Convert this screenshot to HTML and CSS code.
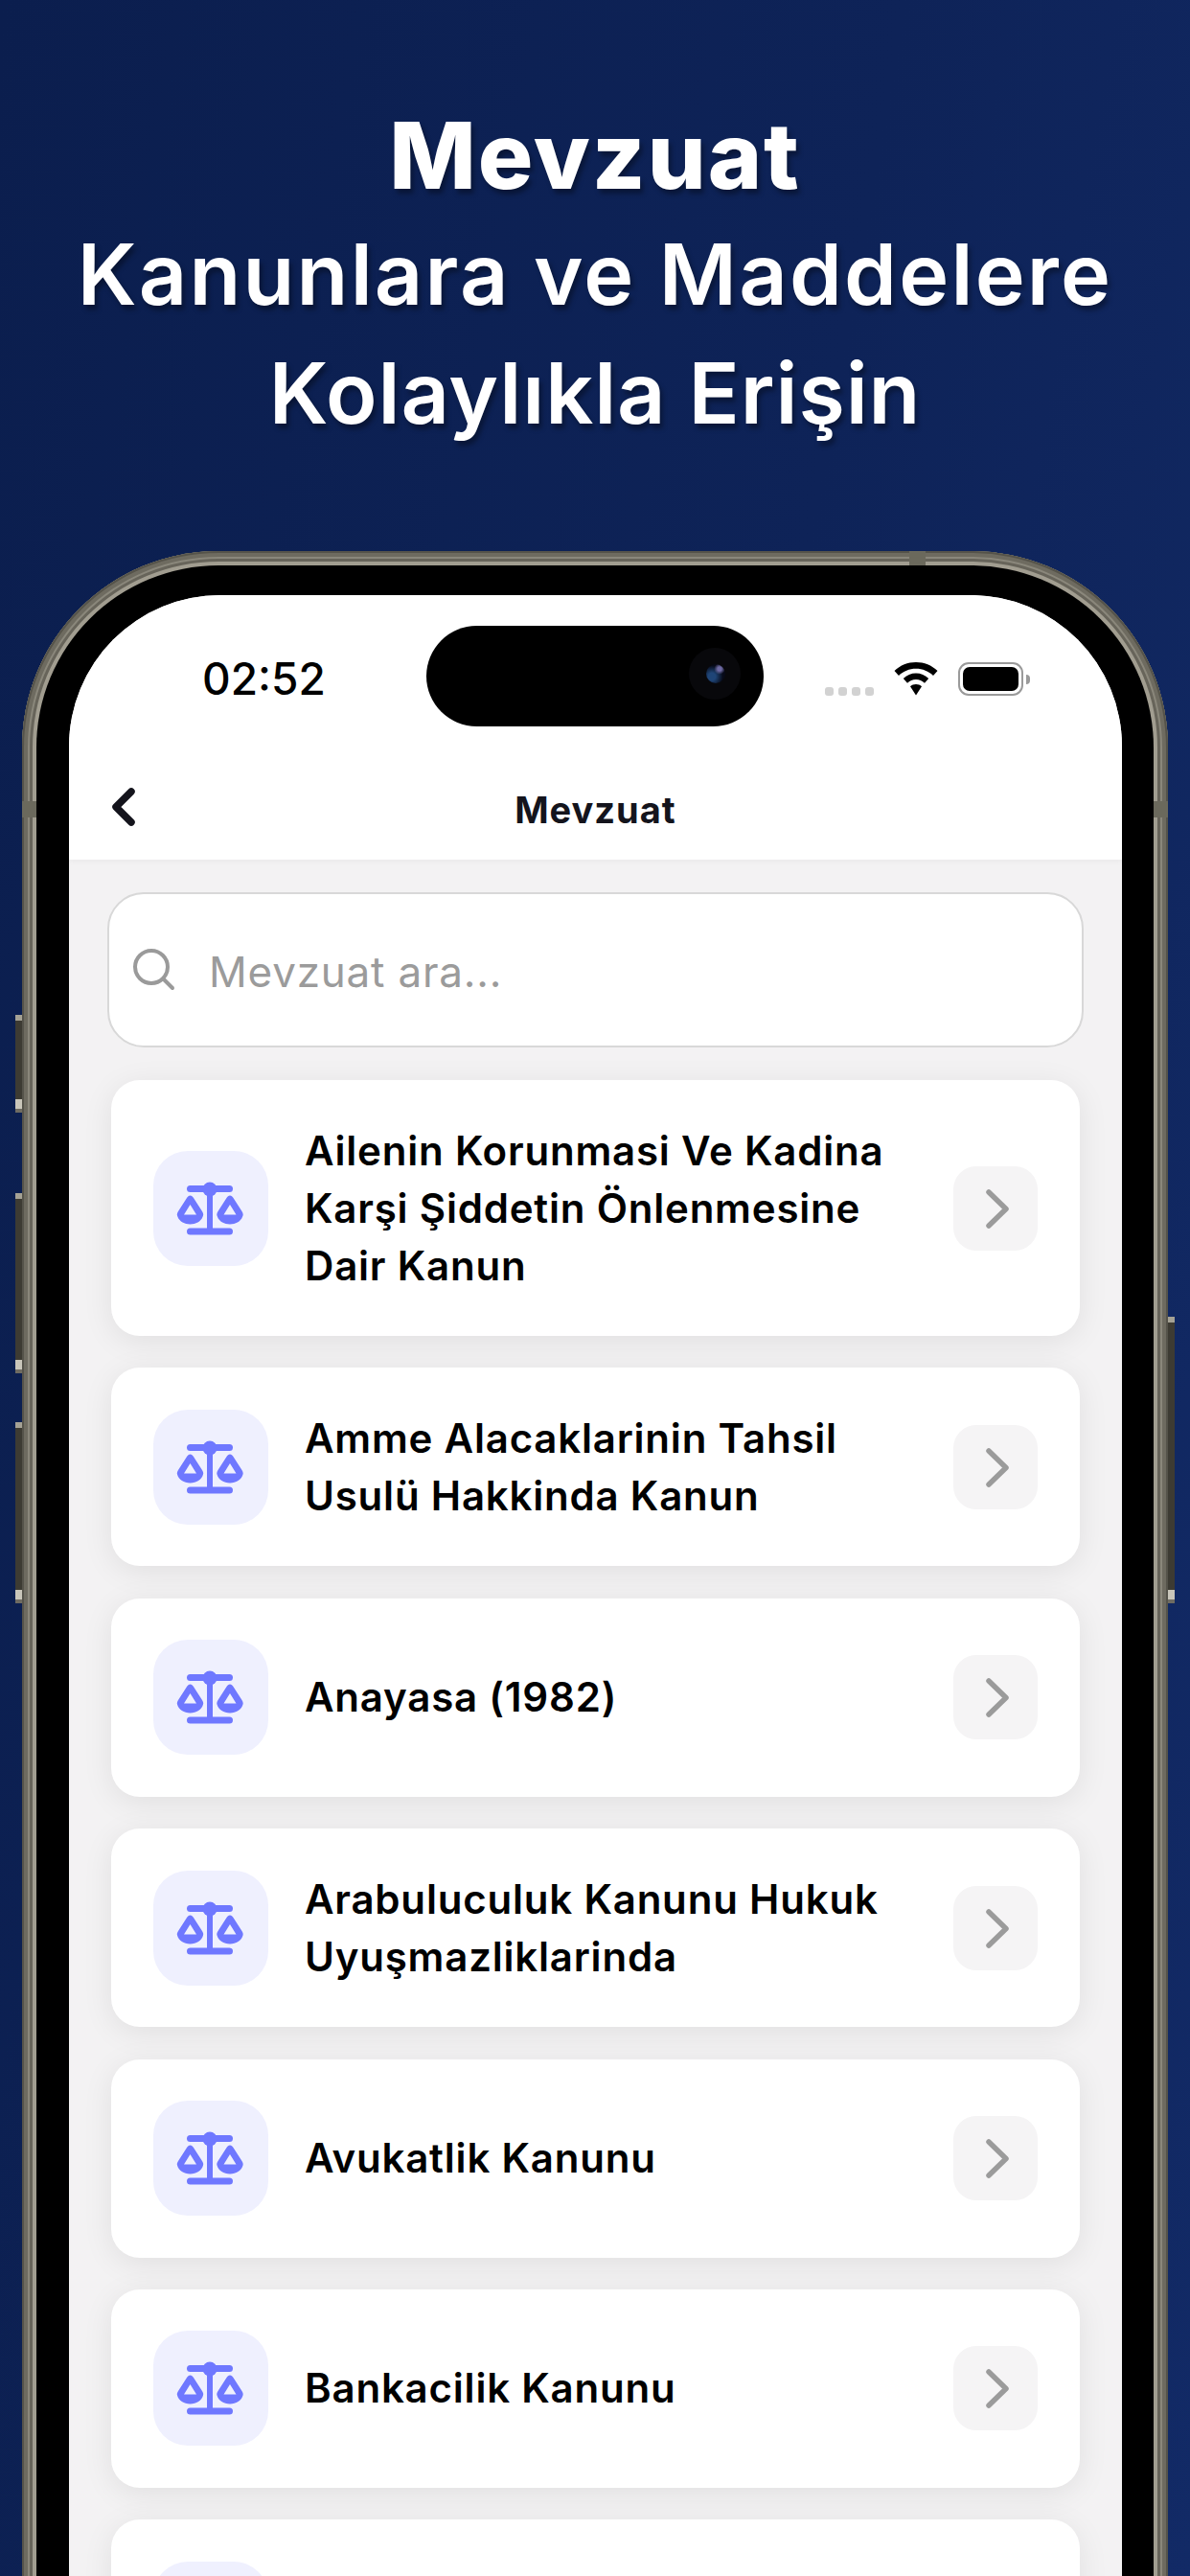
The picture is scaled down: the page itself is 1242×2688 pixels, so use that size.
FILE: index.html
```html
<!DOCTYPE html>
<html>
<head>
  <title>Mevzuat</title>
  <link rel="stylesheet" href="styles.css">
</head>
<body>
  <svg class="defs" width="0" height="0">
    <symbol id="scale" viewBox="0 0 120 120">
      <rect x="35" y="36" width="48" height="7" rx="3.5"/>
      <circle cx="59" cy="40" r="7.5"/>
      <rect x="56" y="42" width="6" height="40"/>
      <rect x="35" y="80.5" width="48" height="7" rx="3.5"/>
      <path id="pan" fill-rule="evenodd" d="M38.5 46.5C40 46.5 41 47.5 42 49L51 63C52 64.5 52.5 66 52 67.5C50.5 73 45 76.5 38.5 76.5C32 76.5 26.5 73 25 67.5C24.5 66 25 64.5 26 63L35 49C36 47.5 37 46.5 38.5 46.5ZM38.5 56L32 66.5H45Z"/>
      <use href="#pan" x="41.5"/>
    </symbol>
    <symbol id="next" viewBox="0 0 88 88">
      <path d="M37 27L55 44.5L37 62" fill="none" stroke="#9b9b9b" stroke-width="5.5" stroke-linecap="round" stroke-linejoin="round"/>
    </symbol>
  </svg>

  <header class="headline">
    <h1>Mevzuat</h1>
    <p>Kanunlara ve Maddelere</p>
    <p class="tight">Kolaylıkla Erişin</p>
  </header>

  <div class="phone-clip">
    <div class="phone">
      <span class="side-btn btn-a"></span>
      <span class="side-btn btn-b"></span>
      <span class="side-btn btn-c"></span>
      <span class="side-btn btn-d"></span>
      <span class="band band-left"></span>
      <span class="band band-right"></span>
      <span class="band band-top"></span>

      <div class="bezel">
        <div class="screen">
          <div class="island"><span class="camera"><span class="lens"></span></span></div>

          <div class="topbar">
            <div class="status">
              <span class="time">02:52</span>
              <div class="status-icons">
                <div class="signal"><i></i><i></i><i></i><i></i></div>
                <svg class="wifi" width="46" height="35" viewBox="0 0 46 35">
                  <path d="M23 0C14.500 0 6.500 3.200 0.500 9L5 14C9.800 9.500 16 6.800 23 6.800C30 6.800 36.200 9.500 41 14L45.500 9C39.500 3.200 31.500 0 23 0Z"/>
                  <path d="M23 11.500C18 11.500 13.300 13.500 9.800 17L14 21.700C16.400 19.400 19.500 18 23 18C26.500 18 29.600 19.400 32 21.700L36.200 17C32.700 13.500 28 11.500 23 11.500Z"/>
                  <path d="M23 23C20.700 23 18.600 23.900 17 25.300L23 34.500L29 25.300C27.400 23.900 25.300 23 23 23Z"/>
                </svg>
                <div class="battery"><span class="battery-fill"></span></div>
                <span class="battery-nub"></span>
              </div>
            </div>
            <nav class="nav">
              <svg class="back" width="26" height="40" viewBox="0 0 26 40">
                <path d="M21 4L5 20L21 36" fill="none" stroke="#14141c" stroke-width="7.500" stroke-linecap="round" stroke-linejoin="round"/>
              </svg>
              <span class="nav-title">Mevzuat</span>
            </nav>
          </div>

          <div class="content">
            <div class="search">
              <svg class="search-icon" width="48" height="48" viewBox="0 0 48 48">
                <circle cx="21" cy="21" r="17" fill="none" stroke="#9a9a9a" stroke-width="4"/>
                <path d="M34 34L43 43" stroke="#9a9a9a" stroke-width="4" stroke-linecap="round"/>
              </svg>
              <span class="search-text">Mevzuat ara...</span>
            </div>

            <div class="list">
              <div class="card">
                <svg class="card-icon"><use href="#scale"/></svg>
                <span class="card-title">Ailenin Korunmasi Ve Kadina Karşi Şiddetin Önlenmesine Dair Kanun</span>
                <svg class="card-next"><use href="#next"/></svg>
              </div>
              <div class="card">
                <svg class="card-icon"><use href="#scale"/></svg>
                <span class="card-title">Amme Alacaklarinin Tahsil Usulü Hakkinda Kanun</span>
                <svg class="card-next"><use href="#next"/></svg>
              </div>
              <div class="card">
                <svg class="card-icon"><use href="#scale"/></svg>
                <span class="card-title">Anayasa (1982)</span>
                <svg class="card-next"><use href="#next"/></svg>
              </div>
              <div class="card">
                <svg class="card-icon"><use href="#scale"/></svg>
                <span class="card-title">Arabuluculuk Kanunu Hukuk Uyuşmazliklarinda</span>
                <svg class="card-next"><use href="#next"/></svg>
              </div>
              <div class="card">
                <svg class="card-icon"><use href="#scale"/></svg>
                <span class="card-title">Avukatlik Kanunu</span>
                <svg class="card-next"><use href="#next"/></svg>
              </div>
              <div class="card">
                <svg class="card-icon"><use href="#scale"/></svg>
                <span class="card-title">Bankacilik Kanunu</span>
                <svg class="card-next"><use href="#next"/></svg>
              </div>
              <div class="card">
                <svg class="card-icon"><use href="#scale"/></svg>
              </div>
            </div>
          </div>
        </div>
      </div>
    </div>
  </div>
</body>
</html>
```

FILE: styles.css
```css
html, body {
  margin: 0;
  height: 2688px;
  overflow: hidden;
}

body {
  font-family: Inter, "Noto Sans", sans-serif;
  background: linear-gradient(100deg, #0b1e4e 0%, #0e2358 55%, #122a66 100%);
  color: #fff;
}

.defs {
  position: absolute;
}

/* Headline above the phone */
.headline {
  height: 575px;
  padding-top: 109px;
  box-sizing: border-box;
  text-align: center;
  text-shadow: 3px 5px 5px rgba(0, 0, 0, 0.35);
}

.headline h1 {
  margin: 0 0 9px;
  font-size: 96px;
  line-height: 106px;
  font-weight: 800;
  letter-spacing: 2px;
}

.headline p {
  margin: 0;
  font-size: 88px;
  line-height: 124px;
  font-weight: 600;
  letter-spacing: 2.2px;
}

.headline .tight {
  letter-spacing: 0.9px;
}

/* Phone frame, cut off by the bottom of the window */
.phone-clip {
  width: 1216px;
  height: 2113px;
  margin: 0 auto;
  padding: 0 10px;
  box-sizing: border-box;
  overflow: hidden;
}

.phone {
  position: relative;
  height: 2200px;
  padding: 15px;
  box-sizing: border-box;
  border-radius: 205px 205px 0 0;
  background: #a19d90;
  box-shadow: inset 0 0 0 2px #55534a, inset 0 0 0 6px #6e6b60, inset 0 0 0 8px #8a877b, inset 0 0 0 11px #67645a;
}

.side-btn {
  position: absolute;
  width: 7px;
  background: linear-gradient(180deg, #a5a295 0 6px, #3d3b33 6px calc(100% - 14px), #c9c6ba calc(100% - 14px) calc(100% - 4px), #6f6c62 calc(100% - 4px));
}

.btn-a { left: -7px; top: 484px; height: 102px; }
.btn-b { left: -7px; top: 670px; height: 188px; }
.btn-c { left: -7px; top: 909px; height: 189px; }
.btn-d { right: -7px; top: 799px; height: 299px; }

.band {
  position: absolute;
  background: #6b695c;
}

.band-left { left: 0; top: 261px; width: 15px; height: 17px; }
.band-right { right: 0; top: 261px; width: 15px; height: 17px; }
.band-top { left: 926px; top: 0; width: 17px; height: 15px; }

.bezel {
  height: 100%;
  padding: 31px 33px 0 34px;
  box-sizing: border-box;
  background: #000;
  border-radius: 190px 190px 0 0;
}

.screen {
  position: relative;
  height: 100%;
  overflow: hidden;
  border-radius: 158px 158px 0 0;
  background: #f3f2f3;
  color: #000;
}

.island {
  position: absolute;
  z-index: 2;
  left: 373px;
  top: 32px;
  width: 352px;
  height: 105px;
  border-radius: 53px;
  background: #000;
}

.camera {
  position: absolute;
  right: 24px;
  top: 23px;
  width: 54px;
  height: 54px;
  border-radius: 50%;
  background: #08080b;
}

.lens {
  position: absolute;
  left: 18px;
  top: 17px;
  width: 20px;
  height: 20px;
  border-radius: 50%;
  background: radial-gradient(circle at 70% 25%, #6f6ba4 0 10%, transparent 28%), radial-gradient(circle at 30% 65%, #1f4577 0 20%, #070a18 60%);
}

/* Status bar and navigation */
.topbar {
  height: 276px;
  background: #fff;
  box-shadow: 0 2px 6px rgba(0, 0, 0, 0.04);
  position: relative;
}

.status {
  display: flex;
  justify-content: space-between;
  align-items: flex-start;
  height: 172px;
  padding: 62px 96px 0 139px;
  box-sizing: border-box;
}

.time {
  font-size: 46px;
  line-height: 50px;
  font-weight: 500;
  width: 129px;
}

.status-icons {
  display: flex;
  align-items: flex-end;
  height: 35px;
  margin-top: 8px;
}

.signal {
  display: flex;
  gap: 5px;
  margin-right: 21px;
}

.signal i {
  width: 9px;
  height: 9px;
  border-radius: 3px;
  background: #d2d2d2;
}

.wifi {
  margin-right: 21px;
}

.battery {
  width: 68px;
  height: 35px;
  padding: 3px;
  box-sizing: border-box;
  border: 2px solid #9a9a9a;
  border-radius: 11px;
}

.battery-fill {
  display: block;
  height: 100%;
  border-radius: 7px;
  background: #000;
}

.battery-nub {
  width: 4px;
  height: 10px;
  margin: 0 0 12px 3px;
  border-radius: 0 4px 4px 0;
  background: #9a9a9a;
}

.nav {
  position: relative;
  height: 104px;
  display: flex;
  align-items: center;
  justify-content: center;
}

.back {
  position: absolute;
  left: 44px;
  top: 29px;
}

.nav-title {
  font-size: 38px;
  font-weight: 700;
  letter-spacing: 1px;
  color: #14141c;
}

/* List area */
.content {
  padding-top: 34px;
}

.search {
  display: flex;
  align-items: center;
  width: 1019px;
  height: 162px;
  margin-left: 40px;
  padding-left: 23px;
  box-sizing: border-box;
  background: #fff;
  border: 2px solid #d8d8d8;
  border-radius: 38px;
}

.search-icon {
  margin-right: 33px;
}

.search-text {
  padding-top: 3px;
  font-size: 44px;
  letter-spacing: 0.8px;
  color: #9b9b9b;
}

.list {
  display: flex;
  flex-direction: column;
  gap: 33.4px;
  width: 1011px;
  margin: 34px 0 0 44px;
}

.card {
  display: flex;
  align-items: center;
  padding: 43.5px 44px;
  background: #fff;
  border-radius: 30px;
  box-shadow: 0 6px 32px rgba(0, 0, 0, 0.08);
}

.card-icon {
  flex: none;
  width: 120px;
  height: 120px;
  border-radius: 36px;
  background: #eff0fe;
  fill: #6f78ff;
}

.card-title {
  flex: 1;
  margin: 0 60px 0 38px;
  font-size: 42px;
  line-height: 60px;
  font-weight: 600;
  letter-spacing: 0.8px;
  color: #000;
}

.card-next {
  flex: none;
  width: 88px;
  height: 88px;
  border-radius: 24px;
  background: #f5f4f5;
}
```
